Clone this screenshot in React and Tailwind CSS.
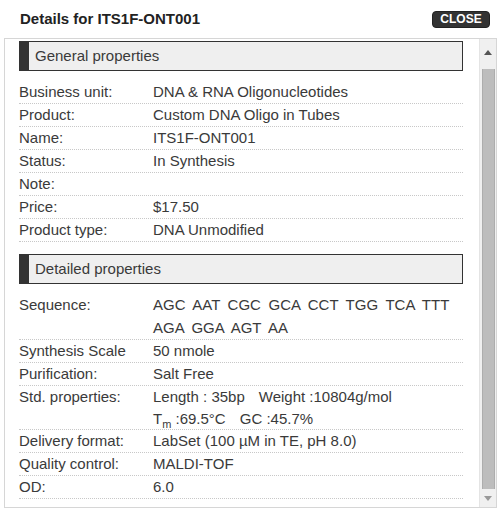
import React from "react";

const F = { fontFamily: '"Liberation Sans", Arial, sans-serif' };

function Row({ label, children }) {
  return (
    <div className="flex border-b border-dotted border-[#c8c8c8] text-[15px] leading-[22px] text-[#3a3a3a]">
      <div className="w-[134px] shrink-0">{label}</div>
      <div className="flex-1 min-w-0">{children}</div>
    </div>
  );
}

function SectionHeader({ title }) {
  return (
    <div className="flex h-[30px] border border-[#333] bg-[#efefef]">
      <div className="w-[9px] bg-[#333]" />
      <div className="pl-[6px] text-[15px] leading-[28px] text-[#3a3a3a]">{title}</div>
    </div>
  );
}

export default function App() {
  return (
    <div style={F} className="w-[501px] h-[512px] bg-white overflow-hidden">
      <div className="flex items-center justify-between h-[38px] pl-[20px] pr-[11px]">
        <div className="text-[15px] font-bold text-[#222]">Details for ITS1F-ONT001</div>
        <button className="h-[17px] w-[58px] rounded-[4px] bg-[#333] border border-[#222] text-white text-[12px] font-bold leading-[15px]">
          CLOSE
        </button>
      </div>
      <div className="mx-[4px] h-[470px] border border-[#d6d6d6] flex">
        <div className="flex-1 pl-[14px] pr-[16px] pt-[2px]">
          <SectionHeader title="General properties" />
          <div className="mt-[10px]">
            <Row label="Business unit:">DNA &amp; RNA Oligonucleotides</Row>
            <Row label="Product:">Custom DNA Oligo in Tubes</Row>
            <Row label="Name:">ITS1F-ONT001</Row>
            <Row label="Status:">In Synthesis</Row>
            <Row label="Note:">&nbsp;</Row>
            <Row label="Price:">$17.50</Row>
            <Row label="Product type:">DNA Unmodified</Row>
          </div>
          <div className="mt-[12px]">
            <SectionHeader title="Detailed properties" />
          </div>
          <div className="mt-[10px]">
            <Row label="Sequence:">
              <div className="leading-[22.5px] [word-spacing:3.4px]">AGC AAT CGC GCA CCT TGG TCA TTT AGA GGA AGT AA</div>
            </Row>
            <Row label="Synthesis Scale">50 nmole</Row>
            <Row label="Purification:">Salt Free</Row>
            <Row label="Std. properties:">
              <div className="leading-[22px]">
                Length : 35bp<span className="inline-block w-[14px]" />Weight :10804g/mol
              </div>
              <div className="h-[21px] leading-[21px]">
                T<span className="relative top-[4px] text-[11px]">m</span> :69.5°C<span className="inline-block w-[14px]" />GC :45.7%
              </div>
            </Row>
            <Row label="Delivery format:">LabSet (100 µM in TE, pH 8.0)</Row>
            <Row label="Quality control:">MALDI-TOF</Row>
            <Row label="OD:">6.0</Row>
          </div>
        </div>
        <div className="w-[17px] bg-[#f0f0f0] border-l border-[#e4e4e4] flex flex-col items-center">
          <div className="h-[30px] flex items-center justify-center w-full pb-[4px]">
            <svg width="8" height="5" viewBox="0 0 8 5"><path d="M4 0L8 5H0z" fill="#555" /></svg>
          </div>
          <div className="flex-1 w-[13px] bg-[#bdbdbd] border-x border-[#adadad]" />
          <div className="h-[18px] flex items-center justify-center w-full">
            <svg width="8" height="5" viewBox="0 0 8 5"><path d="M0 0H8L4 5z" fill="#999" /></svg>
          </div>
        </div>
      </div>
    </div>
  );
}
